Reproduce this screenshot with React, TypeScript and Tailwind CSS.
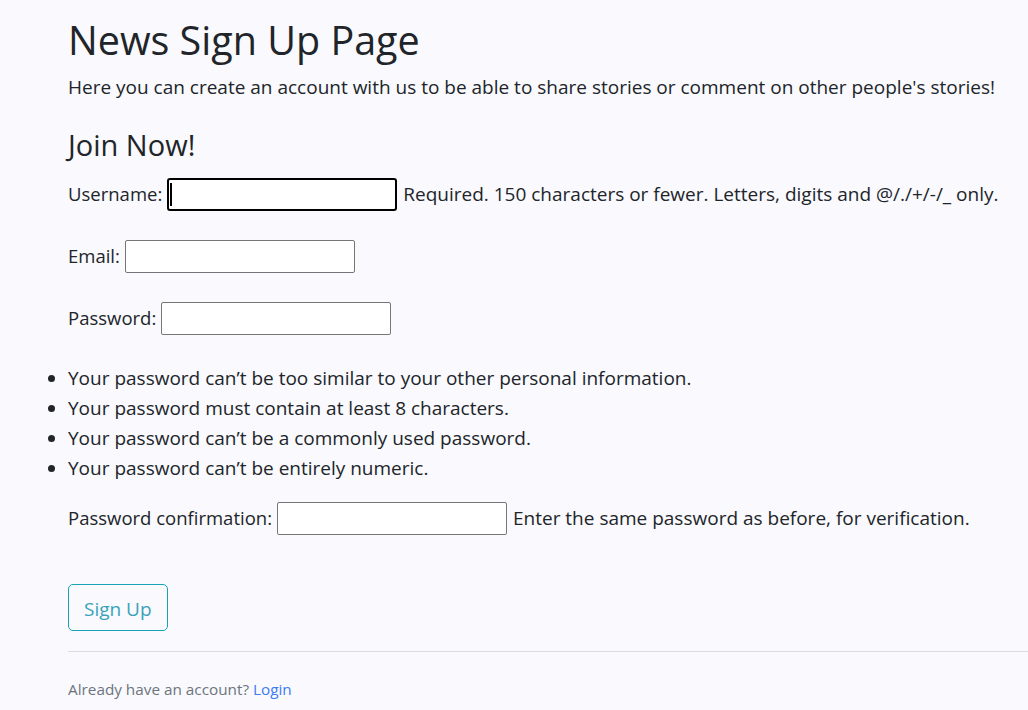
import React from "react";

const rules = [
  "Your password can’t be too similar to your other personal information.",
  "Your password must contain at least 8 characters.",
  "Your password can’t be a commonly used password.",
  "Your password can’t be entirely numeric.",
];

const Field = ({ label, focused, help }: { label: string; focused?: boolean; help?: string }) => (
  <div className="flex items-center h-[42px] whitespace-nowrap">
    <label className="mr-[5px]">{label}</label>
    {focused ? (
      <div className="relative w-[230px] h-[33px] bg-white border-2 border-black rounded-[3px]">
        <span className="absolute left-[1px] top-[3px] w-[2px] h-[23px] bg-black" />
      </div>
    ) : (
      <input className="w-[230px] h-[33px] bg-white border border-[#767676] rounded-[2px] outline-none" />
    )}
    {help && <span className="ml-[6px] text-[19px]">{help}</span>}
  </div>
);

export default function App() {
  return (
    <div
      className="min-h-[710px] bg-[#f9f9fe] text-[#212529] text-[18.5px] overflow-hidden"
      style={{ fontFamily: '"Open Sans", "Noto Sans", sans-serif' }}
    >
      <div className="pl-[68px] pt-[14px] w-[1200px]">
        <h1 className="text-[39.5px] leading-[52px] font-medium">News Sign Up Page</h1>
        <p className="mt-[6px] leading-[30px] text-[19px]">
          Here you can create an account with us to be able to share stories or comment on other people's stories!
        </p>
        <h3 className="mt-[24px] text-[29px] leading-[38px]">Join Now!</h3>

        <div className="mt-[9px] flex flex-col gap-[20px]">
          <Field
            label="Username:"
            focused
            help="Required. 150 characters or fewer. Letters, digits and @/./+/-/_ only."
          />
          <Field label="Email:" />
          <Field label="Password:" />
        </div>

        <ul className="mt-[24px] list-disc -ml-[40px] pl-[40px] leading-[30px] text-[19px]">
          {rules.map((r) => (
            <li key={r}>{r}</li>
          ))}
        </ul>

        <div className="mt-[14px]">
          <Field label="Password confirmation:" help="Enter the same password as before, for verification." />
        </div>

        <button className="mt-[45px] h-[47px] px-[15px] border border-[#17a2b8] text-[#3aa3b8] rounded-[5px] text-[19px] leading-[30px] pt-[2px]">
          Sign Up
        </button>

        <hr className="mt-[20px] border-t border-[#dcdce2]" />

        <p className="mt-[26px] text-[15.3px] text-[#6c757d]">
          Already have an account? <a className="text-[#3b7cf6]">Login</a>
        </p>
      </div>
    </div>
  );
}
